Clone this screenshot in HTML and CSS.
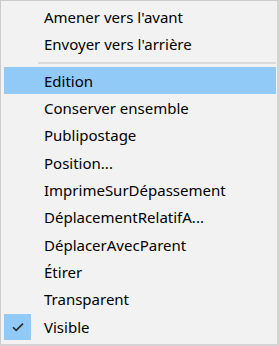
FILE: index.html
```html
<!DOCTYPE html>
<html lang="fr">

<head>
  <meta charset="UTF-8">
  <meta name="viewport" content="width=device-width, initial-scale=1.0">
  <title>Menu contextuel</title>
  <link rel="stylesheet" href="styles.css">
</head>

<body>
  <div class="menu">
    <div class="item"><span class="gutter"></span><span class="label">Amener vers l'avant</span></div>
    <div class="item"><span class="gutter"></span><span class="label">Envoyer vers l'arrière</span></div>
    <div class="sep"></div>
    <div class="item hot"><span class="gutter"></span><span class="label">Edition</span></div>
    <div class="item"><span class="gutter"></span><span class="label">Conserver ensemble</span></div>
    <div class="item"><span class="gutter"></span><span class="label">Publipostage</span></div>
    <div class="item"><span class="gutter"></span><span class="label">Position...</span></div>
    <div class="item"><span class="gutter"></span><span class="label">ImprimeSurDépassement</span></div>
    <div class="item"><span class="gutter"></span><span class="label">DéplacementRelatifA...</span></div>
    <div class="item"><span class="gutter"></span><span class="label">DéplacerAvecParent</span></div>
    <div class="item"><span class="gutter"></span><span class="label">Étirer</span></div>
    <div class="item"><span class="gutter"></span><span class="label">Transparent</span></div>
    <div class="item">
      <span class="gutter checked">
        <svg width="12" height="10" viewBox="0 0 12 10">
          <path d="M1 5.2 L4.2 8.4 L11 1.6" fill="none" stroke="#2b2b2b" stroke-width="1.6" />
        </svg>
      </span>
      <span class="label">Visible</span>
    </div>
  </div>
</body>

</html>
```

FILE: styles.css
```css
html,
body {
  margin: 0;
  padding: 0;
}

body {
  width: 279px;
  height: 346px;
  font-family: "Noto Sans", "Open Sans", sans-serif;
  font-size: 15px;
  color: #000;
}

.menu {
  box-sizing: border-box;
  width: 279px;
  height: 346px;
  background-color: #f2f2f2;
  border: 1px solid #cccccc;
  border-right: 2px solid #d4d4d4;
  border-bottom: 2px solid #d4d4d4;
  padding: 2.5px 1px 0 3px;
}

.item {
  display: flex;
  align-items: center;
  height: 27.33px;
}

.item.hot {
  background-color: #91c9f7;
}

.gutter {
  display: flex;
  align-items: center;
  justify-content: center;
  width: 27px;
  height: 26px;
  margin-right: 13px;
}

.gutter.checked {
  background-color: #91c9f7;
}

.label {
  white-space: nowrap;
}

.sep {
  height: 2px;
  margin: 3.5px 0 3.5px 34px;
  background-color: #dadada;
}
```
